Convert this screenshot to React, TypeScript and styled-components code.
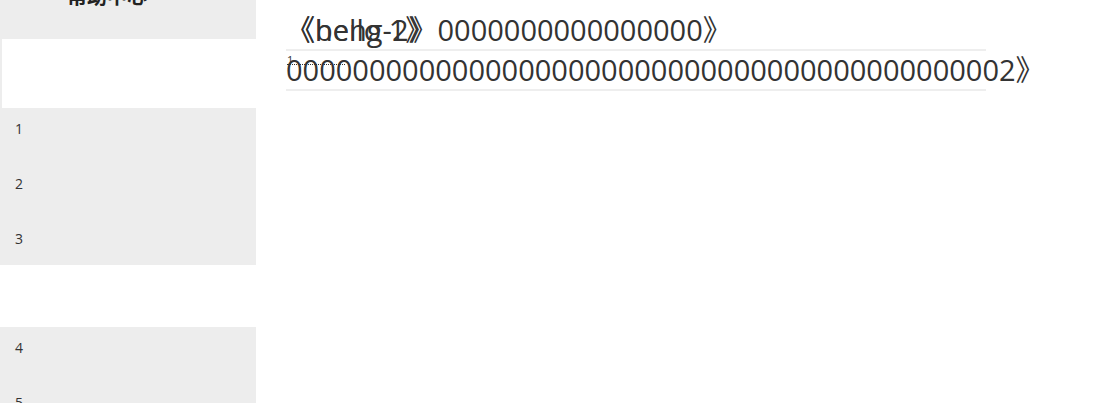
import React from "react";
import styled, { createGlobalStyle } from "styled-components";

const GlobalStyle = createGlobalStyle`
  html, body {
    margin: 0;
    padding: 0;
    background: #fff;
    overflow: hidden;
  }
  body {
    font-family: "Open Sans", "Noto Sans CJK SC", sans-serif;
    color: #333;
  }
`;

const Page = styled.div`
  display: flex;
  height: 403px;
`;

const Sidebar = styled.aside`
  width: 256px;
  flex-shrink: 0;
  background: #ededed;
  display: flex;
  flex-direction: column;
  overflow: hidden;
  & > * {
    flex-shrink: 0;
  }
`;

const SideTitle = styled.h2`
  margin: -19px 0 28px;
  padding-left: 67px;
  font-family: "Noto Sans CJK SC", sans-serif;
  font-size: 20px;
  line-height: 30px;
  font-weight: 700;
  color: #222;
`;

const Blank = styled.div<{ $h: number; $inset?: number }>`
  height: ${(p) => p.$h}px;
  margin-left: ${(p) => p.$inset || 0}px;
  background: #fff;
`;

const SideItem = styled.div<{ $h?: number }>`
  height: ${(p) => p.$h || 55}px;
  box-sizing: border-box;
  padding: 13px 0 0 15px;
  font-size: 14px;
  line-height: 16px;
  color: #333;
`;

const Main = styled.main`
  padding-left: 30px;
  width: 700px;
`;

const List = styled.ul`
  list-style: none;
  margin: 11px 0 0;
  padding: 0;
`;

const Item = styled.li`
  position: relative;
  height: 38px;
  border-bottom: 2px solid #eeeeee;
  font-size: 29px;
  line-height: 38px;
  white-space: nowrap;
  color: #333;
`;

const Layer = styled.span`
  position: absolute;
  left: 0;
  top: 0;
`;

const Note = styled.span`
  position: absolute;
  left: 1px;
  top: 4px;
  width: 58px;
  font-size: 11px;
  line-height: 9px;
  border-bottom: 1px dotted #333;
`;

const zeros = (n: number) => "0".repeat(n);

export default function App() {
  return (
    <>
      <GlobalStyle />
      <Page>
        <Sidebar>
          <SideTitle>帮助中心</SideTitle>
          <Blank $h={69} $inset={2} />
          <SideItem>1</SideItem>
          <SideItem>2</SideItem>
          <SideItem $h={47}>3</SideItem>
          <Blank $h={62} />
          <SideItem>4</SideItem>
          <SideItem>5</SideItem>
        </Sidebar>
        <Main>
          <List>
            <Item>
              <Layer>《hello 1》</Layer>
              <Layer>{"《beng-2》" + zeros(16) + "》"}</Layer>
            </Item>
            <Item>
              <Note>1</Note>
              {zeros(43) + "2》"}
            </Item>
          </List>
        </Main>
      </Page>
    </>
  );
}
